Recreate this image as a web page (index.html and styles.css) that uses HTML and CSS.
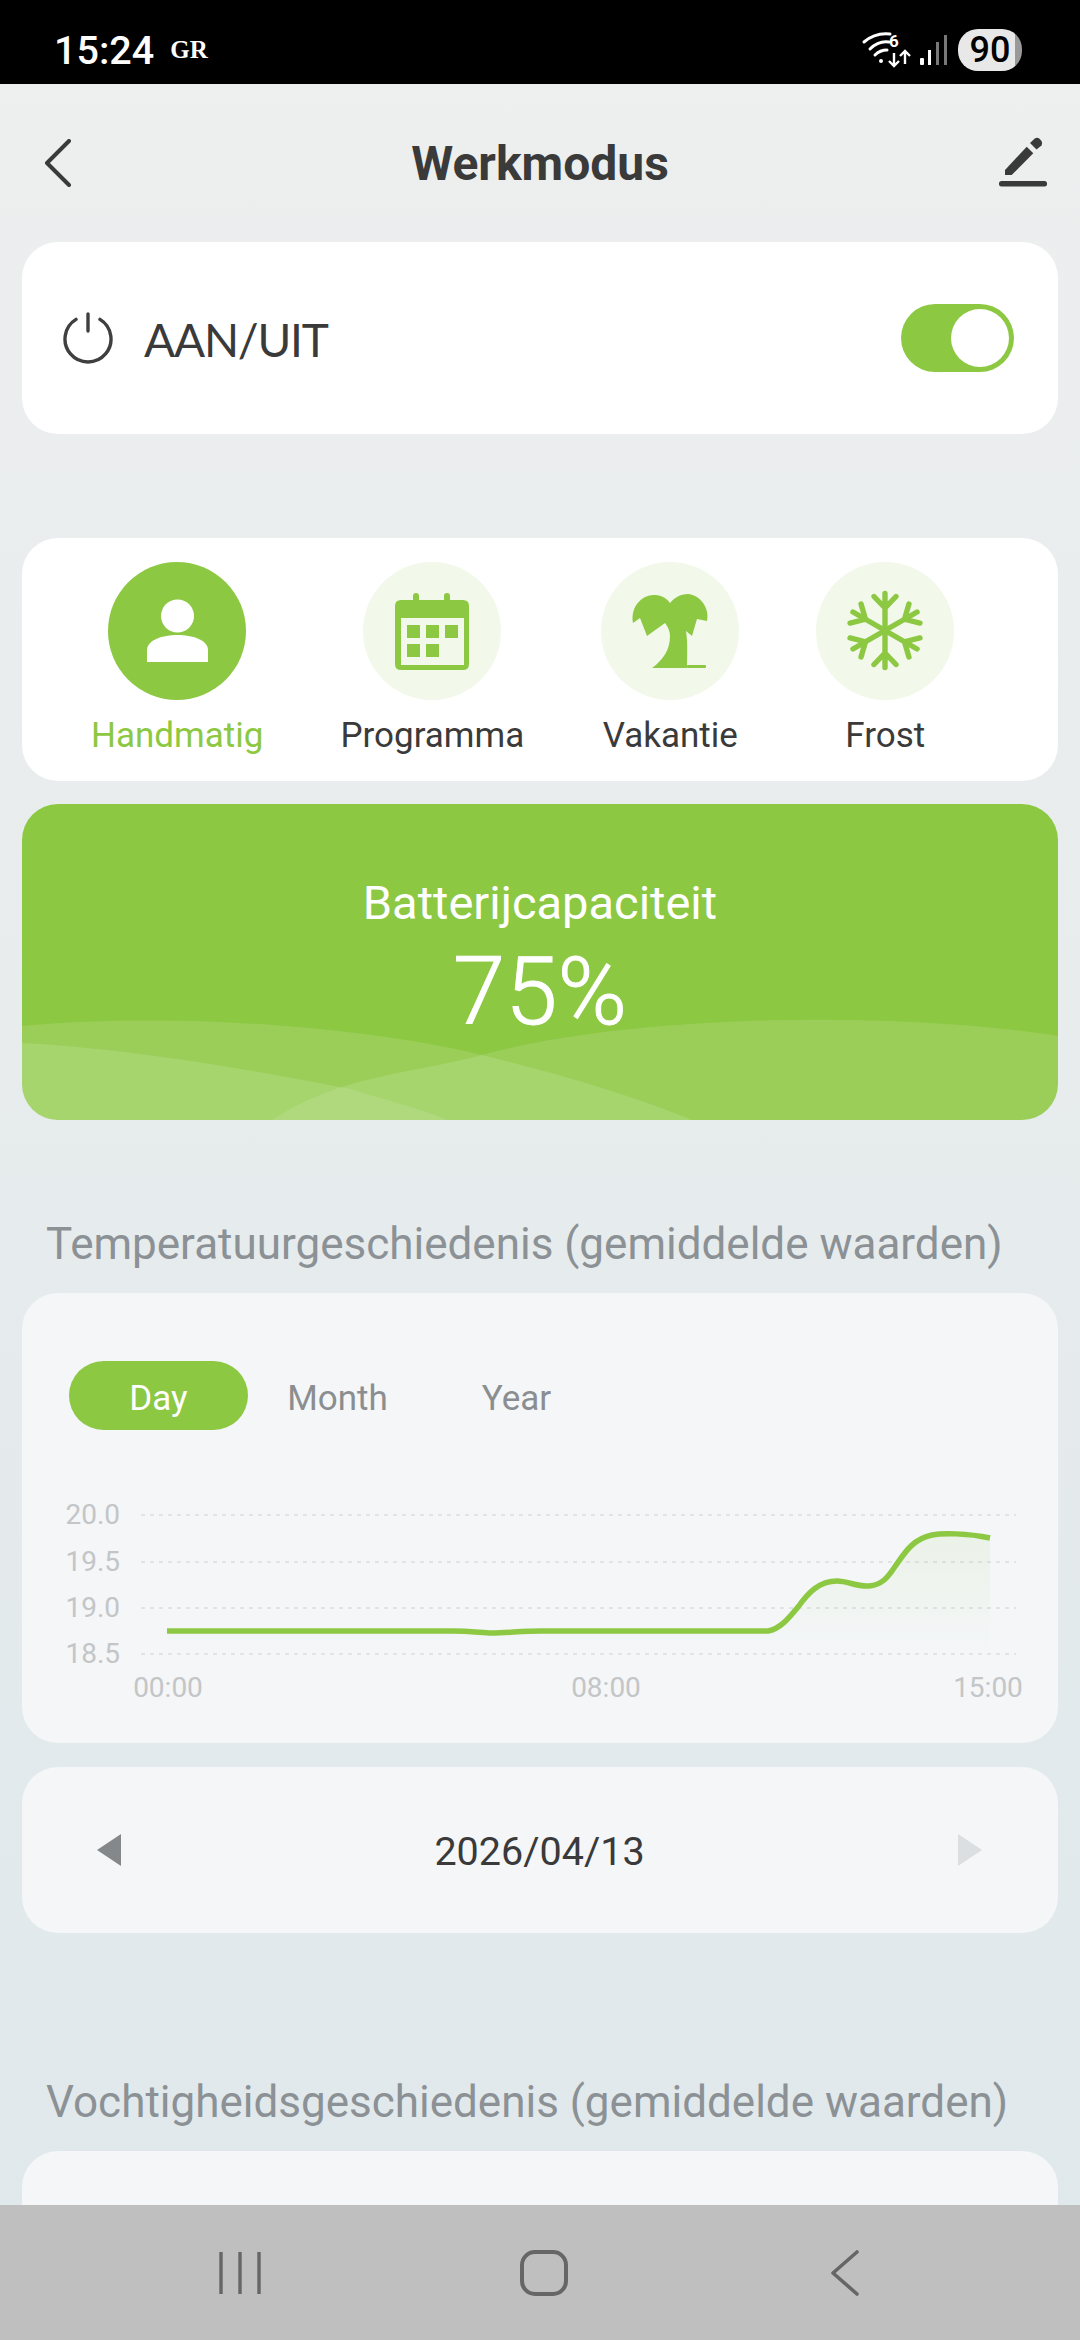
FILE: index.html
```html
<!DOCTYPE html>
<html lang="nl">
<head>
    <meta charset="UTF-8">
    <meta name="viewport" content="width=device-width, initial-scale=1.0">
    <title>Werkmodus</title>
    <link rel="stylesheet" href="styles.css">
</head>
<body>
    <div class="status-bar">
        <span class="clock">15:24</span>
        <span class="carrier">GR</span>
        <svg class="status-icons" width="90" height="40" viewBox="0 0 90 40">
            <g fill="none" stroke="#fff" stroke-width="3" stroke-linecap="round">
                <path d="M3 12 C10 6 20 3 29 4"/>
                <path d="M9 19 C14 14 21 11 28 12"/>
                <path d="M14 25 C18 21 22 20 26 20"/>
            </g>
            <circle cx="20" cy="31" r="2" fill="#fff"/>
            <text class="wifi-six" x="28" y="17">6</text>
            <g fill="none" stroke="#fff" stroke-width="2.4">
                <path d="M33 23 V36 M28 31 L33 36 L38 31"/>
                <path d="M44 34 V21 M39 26 L44 21 L49 26"/>
            </g>
            <rect x="59" y="28" width="4" height="7" rx="1" fill="#fff"/>
            <rect x="67" y="20" width="3" height="15" fill="#fff"/>
            <rect x="75" y="12" width="3" height="23" fill="#777"/>
            <rect x="83" y="5" width="3" height="30" fill="#777"/>
        </svg>
        <span class="battery">90</span>
    </div>

    <main class="content">
        <header class="top-bar">
            <svg width="30" height="48" viewBox="0 0 30 48">
                <path d="M26 2 L4 24 L26 46" fill="none" stroke="#3a3a3a" stroke-width="4" stroke-linecap="round" stroke-linejoin="round"/>
            </svg>
            <h1>Werkmodus</h1>
            <svg width="48" height="56" viewBox="0 0 48 56">
                <path d="M6 35 L27.7 11.7 L34.3 18.3 L12.7 40 H6 Z" fill="#3a3a3a"/>
                <path d="M31 8 L35.5 3.7 Q38 2 40.5 3.7 L42.5 6 Q44 8.5 42.5 10.5 L37.5 14.5 Z" fill="#3a3a3a"/>
                <rect y="46" width="48" height="5.5" rx="2.5" fill="#3a3a3a"/>
            </svg>
        </header>

        <section class="card power-card">
            <svg class="power-icon" width="50" height="52" viewBox="0 0 50 52">
                <path d="M13 7.4 A23 23 0 1 0 37 7.4" fill="none" stroke="#3f3f3f" stroke-width="3.4" stroke-linecap="round"/>
                <path d="M25 2 V19" fill="none" stroke="#3f3f3f" stroke-width="3.4" stroke-linecap="round"/>
            </svg>
            <span class="power-label">AAN/UIT</span>
            <span class="toggle"><span class="toggle-knob"></span></span>
        </section>

        <section class="card mode-card">
            <div class="mode mode-active">
                <span class="mode-circle">
                    <svg width="138" height="138" viewBox="0 0 138 138">
                        <circle cx="69.5" cy="54" r="16.5" fill="#fff"/>
                        <path d="M39 100 V88 C39 78 55 73 69.5 73 C84 73 100 78 100 88 V100 Z" fill="#fff"/>
                    </svg>
                </span>
                <span class="mode-name">Handmatig</span>
            </div>
            <div class="mode">
                <span class="mode-circle">
                    <svg width="138" height="138" viewBox="0 0 138 138">
                        <rect x="50" y="31" width="6" height="12" rx="3" fill="#8dc843"/>
                        <rect x="81" y="31" width="6" height="12" rx="3" fill="#8dc843"/>
                        <path fill-rule="evenodd" d="M38 38 H100 Q106 38 106 44 V102 Q106 108 100 108 H38 Q32 108 32 102 V44 Q32 38 38 38 Z M38 56 V103 H101 V56 Z" fill="#8dc843"/>
                        <g fill="#8dc843">
                            <rect x="44" y="63" width="13" height="13"/>
                            <rect x="63" y="63" width="13" height="13"/>
                            <rect x="82" y="63" width="13" height="13"/>
                            <rect x="44" y="82" width="13" height="13"/>
                            <rect x="63" y="82" width="13" height="13"/>
                        </g>
                    </svg>
                </span>
                <span class="mode-name">Programma</span>
            </div>
            <div class="mode">
                <span class="mode-circle">
                    <svg width="138" height="138" viewBox="0 0 138 138">
                        <path d="M32 61 C29 44 42 32 54 33 C61 33 66 37 69 41 C73 36 79 32 87 32 C99 33 109 46 106 59 L96 57 L91 74 L85 69 C87 82 86 95 86 106 H51 C62 98 69 88 69 74 C69 69 67 65 64 61 L46 74 L39 56 Z" fill="#8dc843"/>
                        <rect x="86" y="103" width="19" height="3" rx="1" fill="#8dc843"/>
                    </svg>
                </span>
                <span class="mode-name">Vakantie</span>
            </div>
            <div class="mode">
                <span class="mode-circle">
                    <svg width="138" height="138" viewBox="-69 -68.5 138 138">
                        <defs>
                            <path id="snow-arm" d="M0 0 V-37 M-11 -34 L0 -22.5 L11 -34" fill="none" stroke="#8dc843" stroke-width="5.4" stroke-linecap="round" stroke-linejoin="round"/>
                        </defs>
                        <use href="#snow-arm"/>
                        <use href="#snow-arm" transform="rotate(60)"/>
                        <use href="#snow-arm" transform="rotate(120)"/>
                        <use href="#snow-arm" transform="rotate(180)"/>
                        <use href="#snow-arm" transform="rotate(240)"/>
                        <use href="#snow-arm" transform="rotate(300)"/>
                    </svg>
                </span>
                <span class="mode-name">Frost</span>
            </div>
        </section>

        <section class="battery-card">
            <svg class="battery-waves" width="1036" height="316" viewBox="0 0 1036 316">
                <path d="M0 222 C150 208 340 222 460 251 C540 270 620 295 670 316 H0 Z" fill="#fff" fill-opacity="0.12"/>
                <path d="M250 316 C320 270 390 270 460 251 C600 212 860 205 1036 232 V316 Z" fill="#fff" fill-opacity="0.12"/>
                <path d="M0 239 C120 245 250 270 329 285 C360 295 400 305 426 316 H0 Z" fill="#fff" fill-opacity="0.12"/>
            </svg>
            <div class="battery-title">Batterijcapaciteit</div>
            <div class="battery-value">75%</div>
        </section>

        <h2 class="section-title">Temperatuurgeschiedenis (gemiddelde waarden)</h2>
        <section class="chart-card">
            <div class="tabs">
                <span class="tab tab-active">Day</span>
                <span class="tab">Month</span>
                <span class="tab">Year</span>
            </div>
            <svg class="chart" width="1036" height="253" viewBox="0 0 1036 253">
                <defs>
                    <linearGradient id="chart-fill" gradientUnits="userSpaceOnUse" x1="0" y1="44" x2="0" y2="164">
                        <stop offset="0" stop-color="#8dc843" stop-opacity="0.09"/>
                        <stop offset="1" stop-color="#8dc843" stop-opacity="0"/>
                    </linearGradient>
                </defs>
                <g stroke="#e1e3e5" stroke-width="2" stroke-dasharray="4 5">
                    <path d="M119 25 H994"/>
                    <path d="M119 72 H994"/>
                    <path d="M119 118 H994"/>
                    <path d="M119 164 H994"/>
                </g>
                <g class="chart-label" text-anchor="end">
                    <text x="98" y="34">20.0</text>
                    <text x="98" y="81">19.5</text>
                    <text x="98" y="127">19.0</text>
                    <text x="98" y="173">18.5</text>
                </g>
                <g class="chart-label" text-anchor="middle">
                    <text x="146" y="207">00:00</text>
                    <text x="584" y="207">08:00</text>
                    <text x="966" y="207">15:00</text>
                </g>
                <path d="M145 141 H430 C450 141 460 143 470 143 C485 143 500 141 520 141 H735 L746 141 C758 139 767 128 776 117 C786 103 797 91 815 91 C826 91 835 97 847 96 C860 95 866 87 872 78 C882 64 890 49 910 45 C920 43 945 43 968 48 V164 H145 Z" fill="url(#chart-fill)"/>
                <path d="M145 141 H430 C450 141 460 143 470 143 C485 143 500 141 520 141 H735 L746 141 C758 139 767 128 776 117 C786 103 797 91 815 91 C826 91 835 97 847 96 C860 95 866 87 872 78 C882 64 890 49 910 45 C920 43 945 43 968 48" fill="none" stroke="#8dc843" stroke-width="5.5"/>
            </svg>
        </section>

        <section class="date-card">
            <svg width="24" height="32" viewBox="0 0 24 32"><path d="M24 0 V32 L0 16 Z" fill="#85888a"/></svg>
            <span class="date-text">2026/04/13</span>
            <svg width="24" height="32" viewBox="0 0 24 32"><path d="M0 0 V32 L24 16 Z" fill="#dcdfe1"/></svg>
        </section>

        <h2 class="section-title section-title-far">Vochtigheidsgeschiedenis (gemiddelde waarden)</h2>
        <section class="chart-card"></section>
    </main>

    <nav class="nav-bar">
        <svg width="44" height="46" viewBox="0 0 44 46">
            <path d="M3 2 V44 M22 2 V44 M41 2 V44" fill="none" stroke="#666" stroke-width="3.4"/>
        </svg>
        <svg width="48" height="46" viewBox="0 0 48 46">
            <rect x="2" y="2" width="44" height="42" rx="13" fill="none" stroke="#666" stroke-width="4"/>
        </svg>
        <svg class="nav-back" width="30" height="46" viewBox="0 0 30 46">
            <path d="M27 2 L3 23 L27 44" fill="none" stroke="#666" stroke-width="3.6" stroke-linecap="round" stroke-linejoin="round"/>
        </svg>
    </nav>
</body>
</html>
```

FILE: styles.css
```css
body {
    font-family: Roboto, "Liberation Sans", sans-serif;
    color: #3a3a3a;
    margin: 0;
    width: 1080px;
    height: 2340px;
    display: flex;
    flex-direction: column;
    overflow: hidden;
    background: linear-gradient(#eeefef, #dfe8eb);
}

.status-bar {
    height: 84px;
    box-sizing: border-box;
    flex-shrink: 0;
    background: #000;
    color: #fff;
    display: flex;
    align-items: center;
    padding: 16px 58px 0 54px;
}

.clock {
    font-size: 39.5px;
    font-weight: 500;
}

.carrier {
    font-family: "Liberation Serif", serif;
    font-size: 25px;
    font-weight: bold;
    margin-left: 16px;
}

.status-icons {
    margin-left: auto;
}

.wifi-six {
    font-size: 17px;
    font-weight: 700;
    fill: #fff;
}

.battery {
    width: 64px;
    height: 42px;
    margin-left: 7px;
    border-radius: 20px;
    background: linear-gradient(90deg, #e8e8e8 89%, #999 89%);
    color: #000;
    font-size: 36px;
    font-weight: 500;
    line-height: 42px;
    text-align: center;
}

.content {
    flex: 1;
    min-height: 0;
    overflow: hidden;
    padding: 0 22px;
}

.top-bar {
    height: 158px;
    display: flex;
    align-items: center;
    justify-content: space-between;
    padding: 0 11px 0 21px;
}

.top-bar h1 {
    margin: 0 0 0 8px;
    font-size: 48px;
    font-weight: 700;
}

.card {
    background: #fff;
    border-radius: 36px;
    display: flex;
}

.power-card {
    height: 192px;
    align-items: center;
    padding: 0 44px 0 41px;
    margin-bottom: 104px;
}

.power-label {
    font-family: Lato, Roboto, sans-serif;
    font-size: 46px;
    letter-spacing: -1.2px;
    line-height: 60px;
    padding-top: 3px;
    margin-left: 31px;
}

.toggle {
    margin-left: auto;
    width: 113px;
    height: 68px;
    box-sizing: border-box;
    padding: 5px;
    border-radius: 34px;
    background: #8dc843;
    display: flex;
    justify-content: flex-end;
}

.toggle-knob {
    width: 58px;
    height: 58px;
    border-radius: 50%;
    background: #fff;
}

.mode-card {
    height: 243px;
    box-sizing: border-box;
    padding: 24px 0 0 69px;
    gap: 77px;
    margin-bottom: 23px;
}

.mode {
    display: flex;
    flex-direction: column;
    align-items: center;
}

.mode-circle {
    width: 138px;
    height: 138px;
    border-radius: 50%;
    background: #f2f8ea;
}

.mode-circle svg {
    display: block;
}

.mode-name {
    margin-top: 12px;
    font-size: 35px;
    line-height: 48px;
    white-space: nowrap;
}

.mode-active .mode-circle {
    background: #8dc843;
}

.mode-active .mode-name {
    color: #8dc843;
}

.battery-card {
    position: relative;
    height: 316px;
    box-sizing: border-box;
    padding-top: 71px;
    border-radius: 36px;
    overflow: hidden;
    background: #8dc843;
    color: #fff;
    text-align: center;
}

.battery-waves {
    position: absolute;
    left: 0;
    top: 0;
}

.battery-title {
    position: relative;
    font-size: 47px;
    line-height: 56px;
}

.battery-value {
    position: relative;
    margin-top: 6px;
    font-size: 94px;
    font-weight: 300;
    line-height: 110px;
    -webkit-text-stroke: 1px #fff;
}

.section-title {
    margin: 99px 0 24px;
    padding-left: 24px;
    font-size: 44px;
    font-weight: 400;
    line-height: 50px;
    color: #8b9195;
    white-space: nowrap;
}

.section-title-far {
    margin-top: 144px;
}

.chart-card {
    height: 450px;
    box-sizing: border-box;
    padding-top: 68px;
    border-radius: 36px;
    background: #f4f6f8;
}

.tabs {
    display: flex;
    margin-left: 47px;
}

.tab {
    width: 179px;
    height: 69px;
    border-radius: 35px;
    font-size: 35px;
    line-height: 75px;
    text-align: center;
    color: #8b8e90;
}

.tab-active {
    background: #8dc843;
    color: #fff;
}

.chart {
    display: block;
    margin-top: 60px;
}

.chart-label {
    font-size: 28px;
    fill: #c3c5c7;
}

.date-card {
    height: 166px;
    margin-top: 24px;
    border-radius: 36px;
    background: #f4f6f8;
    display: flex;
    align-items: center;
    justify-content: space-between;
    padding: 0 76px 0 75px;
}

.date-text {
    font-size: 39.5px;
    padding-top: 2px;
}

.nav-bar {
    height: 135px;
    flex-shrink: 0;
    background: #bfbfbf;
    display: flex;
    align-items: center;
    gap: 258px;
    padding-left: 218px;
}

.nav-back {
    margin-left: 4px;
}
```
